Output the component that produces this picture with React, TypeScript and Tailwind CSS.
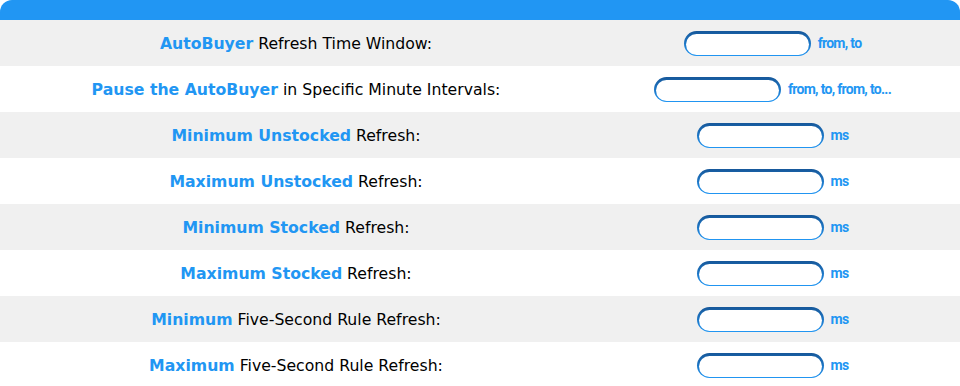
import React from 'react'

const rows: { hl: string; rest: string; unit: string }[] = [
  { hl: 'AutoBuyer', rest: ' Refresh Time Window:', unit: 'from, to' },
  { hl: 'Pause the AutoBuyer', rest: ' in Specific Minute Intervals:', unit: 'from, to, from, to...' },
  { hl: 'Minimum Unstocked', rest: ' Refresh:', unit: 'ms' },
  { hl: 'Maximum Unstocked', rest: ' Refresh:', unit: 'ms' },
  { hl: 'Minimum Stocked', rest: ' Refresh:', unit: 'ms' },
  { hl: 'Maximum Stocked', rest: ' Refresh:', unit: 'ms' },
  { hl: 'Minimum', rest: ' Five-Second Rule Refresh:', unit: 'ms' },
  { hl: 'Maximum', rest: ' Five-Second Rule Refresh:', unit: 'ms' },
]

function Field() {
  return (
    <div className="h-[25px] w-[127px] rounded-full bg-gradient-to-b from-[#17589a] to-[#2196f3] p-[2px]">
      <input className="h-full w-full rounded-full bg-white outline-none" />
    </div>
  )
}

export default function App() {
  return (
    <div className="w-[960px] bg-white font-['DejaVu_Sans',sans-serif]">
      {/* header bar */}
      <div className="h-5 rounded-t-xl bg-[#2196f3]" />
      {rows.map((r, i) => (
        <div
          key={i}
          className={`flex h-[46px] items-center ${i % 2 === 0 ? 'bg-[#f0f0f0]' : 'bg-white'}`}
        >
          <div className="w-[592px] pt-[2px] text-center text-[15.7px] text-black">
            <span className="font-semibold text-[#2196f3]">{r.hl}</span>
            {r.rest}
          </div>
          <div className="flex flex-1 items-center justify-center gap-[7px] pr-[7px]">
            <Field />
            <span className="font-['Roboto',sans-serif] text-[14px] font-bold tracking-[-0.7px] text-[#2196f3]">
              {r.unit}
            </span>
          </div>
        </div>
      ))}
    </div>
  )
}
